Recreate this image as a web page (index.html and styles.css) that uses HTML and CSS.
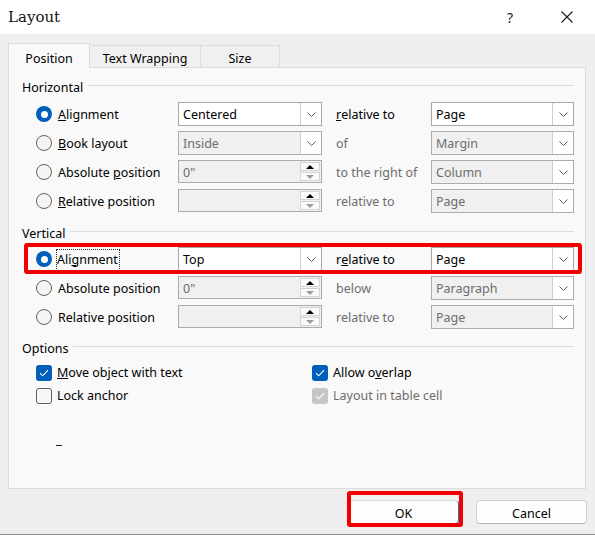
FILE: index.html
```html
<!DOCTYPE html>
<html>
<head>
<meta charset="utf-8">
<link rel="stylesheet" href="styles.css">
</head>
<body>
<div class="window">
  <div class="titlebar">
    <span class="title">Layout</span>
    <span class="help">?</span>
    <span class="close"><svg width="12" height="12" viewBox="0 0 12 12"><path d="M0.5 0.5 L11.5 11.5 M11.5 0.5 L0.5 11.5" stroke="#1a1a1a" stroke-width="1.1" fill="none"/></svg></span>
  </div>
  <div class="client">
    <div class="tabs">
      <div class="tab active">Position</div>
      <div class="tab tw">Text Wrapping</div>
      <div class="tab sz">Size</div>
    </div>
    <div class="panel">
      <div class="ghead"><span>Horizontal</span><i class="gline"></i></div>
      <div class="grid g-h">
        <div class="lbl"><span class="radio on"></span><span><u>A</u>lignment</span></div>
        <div class="combo"><span class="val">Centered</span><span class="arr"><svg width="9" height="5" viewBox="0 0 9 5"><path d="M0.5 0.5 L4.5 4.5 L8.5 0.5" stroke="#5a5a5a" fill="none"/></svg></span></div>
        <div class="rel"><u>r</u>elative to</div>
        <div class="combo"><span class="val">Page</span><span class="arr"><svg width="9" height="5" viewBox="0 0 9 5"><path d="M0.5 0.5 L4.5 4.5 L8.5 0.5" stroke="#5a5a5a" fill="none"/></svg></span></div>

        <div class="lbl"><span class="radio"></span><span><u>B</u>ook layout</span></div>
        <div class="combo dis"><span class="val">Inside</span><span class="arr"><svg width="9" height="5" viewBox="0 0 9 5"><path d="M0.5 0.5 L4.5 4.5 L8.5 0.5" stroke="#5a5a5a" fill="none"/></svg></span></div>
        <div class="rel dis">of</div>
        <div class="combo dis"><span class="val">Margin</span><span class="arr"><svg width="9" height="5" viewBox="0 0 9 5"><path d="M0.5 0.5 L4.5 4.5 L8.5 0.5" stroke="#5a5a5a" fill="none"/></svg></span></div>

        <div class="lbl"><span class="radio"></span><span>Absolute <u>p</u>osition</span></div>
        <div class="spin"><span class="val">0"</span><span class="sbtns"><span class="sb"><i class="up"></i></span><span class="sb"><i class="dn"></i></span></span></div>
        <div class="rel dis">to the right of</div>
        <div class="combo dis"><span class="val">Column</span><span class="arr"><svg width="9" height="5" viewBox="0 0 9 5"><path d="M0.5 0.5 L4.5 4.5 L8.5 0.5" stroke="#5a5a5a" fill="none"/></svg></span></div>

        <div class="lbl"><span class="radio"></span><span><u>R</u>elative position</span></div>
        <div class="spin"><span class="val"></span><span class="sbtns"><span class="sb"><i class="up"></i></span><span class="sb"><i class="dn"></i></span></span></div>
        <div class="rel dis">relative to</div>
        <div class="combo dis"><span class="val">Page</span><span class="arr"><svg width="9" height="5" viewBox="0 0 9 5"><path d="M0.5 0.5 L4.5 4.5 L8.5 0.5" stroke="#5a5a5a" fill="none"/></svg></span></div>
      </div>

      <div class="ghead g2"><span>Vertical</span><i class="gline"></i></div>
      <div class="grid g-v">
        <div class="row-hl">
          <div class="lbl"><span class="radio on"></span><span class="focus">Ali<u>g</u>nment</span></div>
          <div class="combo"><span class="val">Top</span><span class="arr"><svg width="9" height="5" viewBox="0 0 9 5"><path d="M0.5 0.5 L4.5 4.5 L8.5 0.5" stroke="#5a5a5a" fill="none"/></svg></span></div>
          <div class="rel">r<u>e</u>lative to</div>
          <div class="combo"><span class="val">Page</span><span class="arr"><svg width="9" height="5" viewBox="0 0 9 5"><path d="M0.5 0.5 L4.5 4.5 L8.5 0.5" stroke="#5a5a5a" fill="none"/></svg></span></div>
          <span class="redbox"></span>
        </div>

        <div class="lbl"><span class="radio"></span><span>Absolute position</span></div>
        <div class="spin"><span class="val">0"</span><span class="sbtns"><span class="sb"><i class="up"></i></span><span class="sb"><i class="dn"></i></span></span></div>
        <div class="rel dis">below</div>
        <div class="combo dis"><span class="val">Paragraph</span><span class="arr"><svg width="9" height="5" viewBox="0 0 9 5"><path d="M0.5 0.5 L4.5 4.5 L8.5 0.5" stroke="#5a5a5a" fill="none"/></svg></span></div>

        <div class="lbl"><span class="radio"></span><span>Relative position</span></div>
        <div class="spin"><span class="val"></span><span class="sbtns"><span class="sb"><i class="up"></i></span><span class="sb"><i class="dn"></i></span></span></div>
        <div class="rel dis">relative to</div>
        <div class="combo dis"><span class="val">Page</span><span class="arr"><svg width="9" height="5" viewBox="0 0 9 5"><path d="M0.5 0.5 L4.5 4.5 L8.5 0.5" stroke="#5a5a5a" fill="none"/></svg></span></div>
      </div>

      <div class="ghead g3"><span>Options</span><i class="gline"></i></div>
      <div class="opts">
        <div class="opt"><span class="cb on"><svg width="10" height="8" viewBox="0 0 10 8"><path d="M1 4.2 L3.7 6.8 L9 1.2" stroke="#fff" stroke-width="1.1" fill="none"/></svg></span><span><u>M</u>ove object with text</span></div>
        <div class="opt"><span class="cb on"><svg width="10" height="8" viewBox="0 0 10 8"><path d="M1 4.2 L3.7 6.8 L9 1.2" stroke="#fff" stroke-width="1.1" fill="none"/></svg></span><span>Allow o<u>v</u>erlap</span></div>
        <div class="opt"><span class="cb"></span><span>Lock anchor</span></div>
        <div class="opt dis"><span class="cb ondis"><svg width="10" height="8" viewBox="0 0 10 8"><path d="M1 4.2 L3.7 6.8 L9 1.2" stroke="#fff" stroke-width="1.1" fill="none"/></svg></span><span>Layout in table cell</span></div>
      </div>
      <div class="stray"></div>
    </div>
    <div class="footer">
      <div class="okwrap"><button class="btn ok">OK</button><span class="redbox2"></span></div>
      <button class="btn">Cancel</button>
    </div>
  </div>
</div>
</body>
</html>
```
FILE: styles.css
```css
* { box-sizing: border-box; margin: 0; padding: 0; }
html, body { width: 595px; height: 535px; overflow: hidden; }
body {
  font-family: "Noto Sans", "Segoe UI", sans-serif;
  font-size: 12.5px;
  color: #000;
  background: #efefef;
}
u { text-decoration: underline; text-underline-offset: 1px; text-decoration-thickness: 1px; }

.window {
  width: 595px;
  height: 535px;
  display: flex;
  flex-direction: column;
  border-bottom: 1px solid #8c8c8c;
}

.titlebar {
  height: 34px;
  flex: none;
  background: #fff;
  display: flex;
  align-items: center;
  padding-left: 8px;
  padding-right: 22px;
}
.title {
  flex: 1;
  font-family: "DejaVu Serif", serif;
  font-size: 15px;
  color: #111;
  padding-bottom: 1px;
}
.help {
  width: 20px;
  text-align: center;
  font-size: 14px;
  margin-right: 41px;
  color: #222;
}
.close { display: flex; width: 12px; height: 12px; }

.client {
  flex: 1;
  display: flex;
  flex-direction: column;
  padding: 9px 9px 0 8px;
}

.tabs {
  height: 24px;
  display: flex;
  align-items: flex-end;
  position: relative;
  z-index: 2;
}
.tab {
  height: 22px;
  padding-top: 3px;
  line-height: 20px;
  text-align: center;
  background: #f0f0f0;
  border: 1px solid #dcdcdc;
  border-bottom: none;
  border-left: none;
}
.tab.active {
  width: 82px;
  height: 25px;
  padding-top: 5px;
  margin-bottom: -1px;
  background: #f9f9f9;
  border-left: 1px solid #dcdcdc;
}
.tab.tw { width: 111px; }
.tab.sz { width: 79px; }

.panel {
  height: 422px;
  flex: none;
  background: #f9f9f9;
  border: 1px solid #dcdcdc;
  padding: 9px 11px 0 13px;
  position: relative;
}

.ghead {
  height: 20px;
  display: flex;
  align-items: center;
}
.gline {
  flex: 1;
  height: 1px;
  background: #dcdcdc;
  margin-left: 5px;
  transform: translateY(-2px);
}
.g2 { margin-top: 10px; }
.g3 { margin-top: 9px; }

.grid {
  display: grid;
  grid-template-columns: 142px 144px 109px 143px;
  grid-auto-rows: 24px;
  row-gap: 5px;
  margin-left: 14px;
}
.g-h { margin-top: 5px; }
.g-v { margin-top: 4px; }

.row-hl {
  display: contents;
}
.redbox {
  position: absolute;
  left: 15px;
  width: 558px;
  top: 175px;
  height: 31px;
  border: 4px solid #f20000;
  border-radius: 3px;
  pointer-events: none;
}

.lbl {
  display: flex;
  align-items: center;
  gap: 6px;
  white-space: nowrap;
  padding-top: 1px;
}
.lbl .radio { margin-top: -1px; }
.focus {
  outline: 1px dotted #333;
  outline-offset: 0;
  padding: 1px 1px 2px 0;
  margin-left: -1px;
}
.radio {
  width: 16px;
  height: 16px;
  flex: none;
  border-radius: 50%;
  border: 1px solid #616161;
  background: #f4f4f4;
  display: flex;
  align-items: center;
  justify-content: center;
}
.radio.on {
  border: none;
  background: #005fb8;
}
.radio.on::after {
  content: "";
  width: 7px;
  height: 7px;
  border-radius: 50%;
  background: #fff;
}

.combo, .spin {
  display: flex;
  align-items: stretch;
  border: 1px solid #a6a6a6;
  background: #fff;
  height: 24px;
}
.combo .val, .spin .val {
  flex: 1;
  padding-left: 4px;
  padding-top: 1px;
  line-height: 22px;
  white-space: nowrap;
  overflow: hidden;
}
.combo.dis, .spin { background: #f0f0f0; border-color: #ababab; }
.combo.dis .val, .spin .val { color: #6d6d6d; }
.arr {
  width: 21px;
  flex: none;
  background: #fff;
  border-left: 1px solid #cfcfcf;
  display: flex;
  align-items: center;
  justify-content: center;
}

.spin { height: 23px; }
.spin .val { line-height: 21px; }
.sbtns {
  width: 21px;
  flex: none;
  display: flex;
  flex-direction: column;
  padding: 1px 1px 1px 0;
  gap: 1px;
}
.sb {
  flex: 1;
  background: #fbfbfb;
  border: 1px solid #d4d4d4;
  display: flex;
  align-items: center;
  justify-content: center;
}
.up {
  width: 0;
  height: 0;
  border-left: 4px solid transparent;
  border-right: 4px solid transparent;
  border-bottom: 4px solid #000;
}
.dn {
  width: 0;
  height: 0;
  border-left: 4px solid transparent;
  border-right: 4px solid transparent;
  border-top: 4px solid #9c9c9c;
}

.rel {
  padding-left: 14px;
  padding-top: 1px;
  display: flex;
  align-items: center;
  white-space: nowrap;
}
.rel.dis { color: #6d6d6d; }

.opts {
  margin-top: 3px;
  margin-left: 14px;
  display: grid;
  grid-template-columns: 276px 1fr;
  grid-auto-rows: 23px;
}
.opt {
  display: flex;
  align-items: center;
  gap: 5px;
  white-space: nowrap;
}
.opt.dis { color: #6d6d6d; }
.cb {
  width: 16px;
  height: 16px;
  flex: none;
  border-radius: 3px;
  border: 1px solid #616161;
  background: #f7f7f7;
  display: flex;
  align-items: center;
  justify-content: center;
}
.cb.on { border: none; background: #005fb8; }
.cb.ondis { border: none; background: #c6c6c6; }

.stray {
  margin-top: 38px;
  margin-left: 34px;
  width: 6px;
  height: 1px;
  background: #1a1a1a;
  border-right: 1px solid #333;
}

.footer {
  display: flex;
  justify-content: flex-end;
  gap: 17px;
  padding-top: 11px;
  margin-right: -1px;
}
.okwrap { position: relative; }
.btn {
  width: 111px;
  height: 24px;
  padding-top: 3px;
  font-family: inherit;
  font-size: 12.5px;
  color: #000;
  background: #fdfdfd;
  border: 1px solid #d0d0d0;
  border-bottom-color: #b5b5b5;
  border-radius: 4px;
  display: block;
}
.btn.ok {
  border-color: #d6dde6;
  border-right-color: #1d6cc0;
  border-bottom-color: #005fb8;
}
.redbox2 {
  position: absolute;
  left: -1px;
  right: -4px;
  top: -9px;
  bottom: -3px;
  border: 4px solid #f20000;
  border-radius: 3px;
  pointer-events: none;
}
```
